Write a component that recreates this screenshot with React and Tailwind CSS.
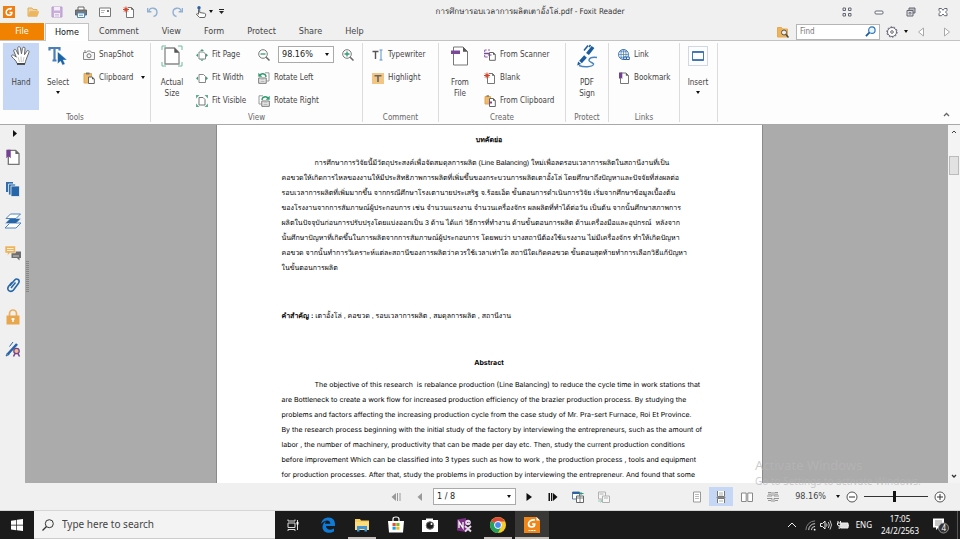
import { useState } from 'react';

const Icon = ({ size = 12, box = 12, children, className = '' }) => (
  <svg
    width={size}
    height={size}
    viewBox={`0 0 ${box} ${box}`}
    fill="none"
    stroke="#666"
    strokeWidth="1"
    aria-hidden="true"
    className={`shrink-0 ${className}`}
  >
    {children}
  </svg>
);

const Caret = ({ className = '' }) => (
  <svg width="4" height="3" viewBox="0 0 4 3" aria-hidden="true" className={`shrink-0 ${className}`}>
    <path d="M0 0h4L2 3z" fill="#111" />
  </svg>
);

/* ---------- title bar icons ---------- */

const FoxitLogo = () => (
  <Icon size={12}>
    <rect width="12" height="12" fill="#ee7d14" stroke="none" />
    <path d="M8.800 2.600C5.500 2.200 3.200 4 3.200 6.300c0 1.900 1.300 3 3 3 1.600 0 2.700-1 2.700-2.800H6.500" stroke="#fff" strokeWidth="1.500" />
    <path d="M9 1.800l-3 2.400 2-.2z" fill="#fff" stroke="none" />
  </Icon>
);

const OpenIcon = () => (
  <Icon>
    <path d="M1 10V2h4l1 1.500h4V5" fill="#f3d39b" stroke="#e2ae5c" />
    <path d="M1 10.500L3 5.500h9l-2 5z" fill="#eeb65c" stroke="#e2ae5c" strokeWidth=".5" />
  </Icon>
);

const SaveIcon = () => (
  <Icon>
    <path d="M1 1h10v10H1z" fill="#c9addb" stroke="#bb9ccf" />
    <path d="M3 1h6v3.500H3zM3 7h6v4H3z" fill="#f4eef8" stroke="none" />
    <path d="M4 8.500h4M4 10h4" stroke="#bb9ccf" strokeWidth=".6" />
  </Icon>
);

const PrintIcon = () => (
  <Icon>
    <path d="M3 4V1h6v3" fill="#fff" />
    <path d="M.5 4h11v5h-11z" fill="#777" stroke="#666" />
    <path d="M2.500 7h7v4.500h-7z" fill="#fff" stroke="#4b8ac0" />
    <path d="M4 9.200h4" stroke="#4b8ac0" />
  </Icon>
);

const MailIcon = () => (
  <Icon>
    <path d="M.5 2h11v8.500H.5z" fill="#fff" stroke="#777" />
    <path d="M2 4.500h4M2 6.500h3" stroke="#999" strokeWidth=".7" />
    <path d="M8 4h2v2H8z" fill="#777" stroke="none" />
  </Icon>
);

const BlankPage = () => (
  <Icon>
    <path d="M3.500 3v8.500h7V3.500L8.500 1.500H5" fill="#fff" stroke="#777" />
    <path d="M8.200 1.200v2.600h2.600z" fill="#555" stroke="none" />
    <path d="M3 .5v6M0 3.500h6M1 1.400l4 4.200M5 1.400L1 5.600" stroke="#d2492e" />
    <circle cx="3" cy="3.500" r="1.600" fill="#d2492e" stroke="none" />
  </Icon>
);

const Undo = ({ flip }) => (
  <Icon>
    <g transform={flip ? 'matrix(-1 0 0 1 12 0)' : undefined} stroke="#8fb0d2" strokeWidth="1.400">
      <path d="M1.800 5a4.200 4.200 0 1 1 4.700 5.500" />
      <path d="M.6 2v3.700h3.800" />
    </g>
  </Icon>
);

const TouchIcon = () => (
  <Icon>
    <path d="M3.500 8V3.500q.6-.8 1.200 0v3l4.800.8q1.600.4 1.200 1.800L9.700 11.500H4.500L1.300 8.200q.8-.9 2.200 0z" fill="#fff" stroke="#666" />
    <circle cx="4" cy="1.800" r="1.700" fill="#2a62a5" stroke="none" />
  </Icon>
);

/* ---------- ribbon icons ---------- */

const HandIcon = () => (
  <Icon size={22} box={22}>
    <path
      d="M7 18.500C6.500 16 4 14 1.800 11.800c-1-1.300.5-2.500 1.900-1.600l2.600 1.900L3.800 6.200c-.6-1.900 1.500-2.600 2.300-1l2.300 4.300L7.700 3.300c-.1-2 2.300-2.200 2.700-.3l1.100 5.900.9-5.600c.4-1.800 2.800-1.500 2.600.4l-.5 6 2.300-3.500c1-1.400 2.700-.5 2.200 1l-2.700 6.900c-.5 1.700-1.100 3-1.300 4.400z"
      fill="#fff"
      stroke="#666"
    />
    <path d="M8 12l1.500 5M11 11.500l.3 5.500M14 12l-1 5" stroke="#bbb" strokeWidth=".8" />
    <path d="M7 19h8" stroke="#444" strokeWidth="1.800" />
  </Icon>
);

const SelectIcon = () => (
  <Icon size={20} box={20}>
    <path d="M1.500 4.500V2h10v2.500M6.500 2v12M4.500 14.500h4" stroke="#4a7fb8" strokeWidth="2.200" />
    <path d="M9.500 5.500V18l3-2.700 2 4 2.600-1.300-1.900-3.900h4z" fill="#1c64a8" stroke="#fff" strokeWidth=".5" />
  </Icon>
);

const CameraIcon = () => (
  <Icon>
    <path d="M.5 3.500h3l1-1.500h3l1 1.500h3v7H.5z" fill="#f6f6f6" stroke="#888" />
    <circle cx="6" cy="6.800" r="2" stroke="#777" />
    <path d="M1 2h2" stroke="#888" />
  </Icon>
);

const ClipboardIcon = () => (
  <Icon>
    <path d="M1 1.500h7.500V11H1z" fill="#eebb6c" stroke="#e0a650" />
    <path d="M3 .5h3.500v2H3z" fill="#777" stroke="none" />
    <path d="M5.500 5h3.800l2 2v4.500H5.500z" fill="#fff" />
    <path d="M9 4.800V7.200h2.300z" fill="#555" stroke="none" />
  </Icon>
);

const ActualSizeIcon = () => (
  <Icon size={22} box={22}>
    <path d="M1 5V1h4M17 1h4v4M21 17v4h-4M5 21H1v-4" stroke="#6cbc9c" />
    <path d="M4 3h9.500l4.500 4.500V19H4z" fill="#fff" stroke="#888" strokeWidth="1.300" />
    <path d="M13.300 2.800v5h4.900z" fill="#555" stroke="none" />
  </Icon>
);

const FitPageIcon = () => (
  <Icon>
    <path d="M3 3h4.500L9.500 5v5H3z" fill="#fff" stroke="#888" />
    <path d="M6 0L8 2H4zM6 12L4 10.500h4zM0 6.200L2 4.400v3.600zM12 6.200L10 4.400v3.600z" fill="#3f9d7b" stroke="none" />
  </Icon>
);

const FitWidthIcon = () => (
  <Icon>
    <path d="M3 2.500h4.500L9.500 4.500v6H3z" fill="#fff" stroke="#888" />
    <path d="M0 6.300L2 4.400v3.800zM12 6.300L10 4.400v3.800z" fill="#3f9d7b" stroke="none" />
  </Icon>
);

const FitVisibleIcon = () => (
  <Icon>
    <path d="M3 2.500h4L9 4.500v5.500H3z" fill="#fff" stroke="#777" />
    <path d="M0 0h3.500L0 3.500zM12 0v3.500L8.500 0zM12 12H8.500L12 8.500zM0 12V8.500L3.500 12z" fill="#5fae90" stroke="none" />
  </Icon>
);

const ZoomGlass = ({ plus }) => (
  <Icon>
    <circle cx="5" cy="5" r="4.300" fill="#fff" stroke="#777" />
    <path d="M8.200 8.200l3.300 3.300" stroke="#666" strokeWidth="1.500" />
    <path d={plus ? 'M2.500 5h5M5 2.500v5' : 'M2.500 5h5'} stroke="#2f9b6f" strokeWidth="1.300" />
  </Icon>
);

const RotateIcon = ({ flip }) => (
  <Icon>
    <g transform={flip ? 'matrix(-1 0 0 1 12 0)' : undefined}>
      <path d="M7 .8h4V9H8.500" stroke="#999" />
      <path d="M.7 6h7.500v5.300H.7z" fill="#eee" stroke="#777" />
      <path d="M2.500 7.800h4M2.500 9.500h4" stroke="#999" strokeWidth=".6" />
      <path d="M1.500 3.500Q3 1.500 5 1.700q3 .3 3 3.300" stroke="#2f9b6f" strokeWidth="1.400" />
      <path d="M.3 4.800V.8L4.300 4.800z" fill="#2f9b6f" stroke="none" />
    </g>
  </Icon>
);

const TypewriterIcon = () => (
  <Icon>
    <path d="M.5 2.500h6M3.500 2.500V10" stroke="#555" strokeWidth="1.400" />
    <path d="M7.500 1h3M9 1v10M7.500 11h3" stroke="#5b93cb" />
  </Icon>
);

const HighlightIcon = () => (
  <Icon>
    <rect x="0" y="1" width="12" height="11" fill="#f2c583" stroke="none" />
    <path d="M2.500 3.700h7M6 3.500V10" stroke="#666" strokeWidth="1.600" />
  </Icon>
);

const FromFileIcon = () => (
  <Icon size={20} box={20}>
    <path d="M3.500 1h9.500l4.500 4.500V19h-14z" fill="#fff" stroke="#777" />
    <path d="M13 .8v4.900h4.900z" fill="#555" stroke="none" />
    <path d="M1 4.500h9v3.500H1z" fill="#7c4899" stroke="none" />
  </Icon>
);

const ScannerIcon = () => (
  <Icon>
    <path d="M.7 3V1h2M4 1h2M.7 8v-2M.7 8h3" stroke="#8c5aa8" />
    <path d="M0 4.500h6" stroke="#7c4899" strokeWidth="1.500" />
    <path d="M5.500 3.500h3.800l2 2v5.800H5.500z" fill="#fff" />
    <path d="M9 3.200v2.500h2.500z" fill="#555" stroke="none" />
    <path d="M4 6h3.500" stroke="#7c4899" />
  </Icon>
);

const FromClipboardIcon = () => (
  <Icon>
    <path d="M1 1.500h5.500V9H1z" fill="#eebb6c" stroke="#e0a650" />
    <path d="M2.500 .3h2.500v1.400H2.500z" fill="#777" stroke="none" />
    <path d="M5.500 3.500h3.800l2 2v6H5.500z" fill="#fff" />
    <path d="M9 3.200v2.500h2.500z" fill="#555" stroke="none" />
    <path d="M5 6.500h3v2H5z" fill="#7c4899" stroke="none" />
  </Icon>
);

const SignIcon = () => (
  <Icon size={24} box={24}>
    <path d="M18 3L12.500 10M10.500 12.500L5.500 18" stroke="#1c5b9c" strokeWidth="3.600" />
    <path d="M13 1.500L9 6.500" stroke="#1c5b9c" strokeWidth="1.500" />
    <path d="M15.500 1L14 3" stroke="#1c5b9c" strokeWidth="1.500" />
    <path d="M2.200 21.500l.9-4 3 2.400z" fill="#1c5b9c" stroke="none" />
    <path d="M4 21.500c5 2 13 1.500 14.500-1 .8-2-5-2-4.500-4.500.6-2.300 4-3 8-2.500" stroke="#4a83bd" strokeWidth="1.400" />
  </Icon>
);

const LinkIcon = () => (
  <Icon>
    <circle cx="5.500" cy="5.500" r="5" fill="#fff" stroke="#4179b4" />
    <path d="M.5 5.500h10M5.500.5v10M1.500 2.800h8M1.500 8.200h7" stroke="#4179b4" strokeWidth=".7" />
    <ellipse cx="5.500" cy="5.500" rx="2.500" ry="5" stroke="#4179b4" strokeWidth=".7" />
    <path d="M5.800 8h2.500v2.500H5.800zM8.500 8H11.300v2.500H8.500z" fill="#fff" stroke="#2a62a5" />
  </Icon>
);

const BookmarkIcon = ({ size = 12 }) => (
  <Icon size={size}>
    <path d="M2.500 1h5.500l2.500 2.500v8h-8z" fill="#fff" stroke="#777" />
    <path d="M7.800.7v3h3z" fill="#666" stroke="none" />
    <path d="M1 .5h3.300V7L2.700 5.500 1 7z" fill="#744192" stroke="none" />
  </Icon>
);

const FilmIcon = () => (
  <Icon size={12}>
    <path d="M.5 1.500h11v9H.5z" fill="#fff" stroke="#4179b4" />
    <path d="M.5 2.300h11M.5 9.700h11" stroke="#2a62a5" strokeWidth="1.600" />
    <path d="M1.500 2.200h10M1.500 9.800h10" stroke="#cfe0f2" strokeWidth=".6" strokeDasharray="1 1" />
  </Icon>
);

/* ---------- ribbon building blocks ---------- */

const Group = ({ label, width, children }) => (
  <section className={`flex shrink-0 flex-col border-r border-[#dcdcdc] ${width}`}>
    <div className="flex h-[67px] shrink-0 items-start">{children}</div>
    <h2 className="text-center leading-[16px] text-[#666]">{label}</h2>
  </section>
);

const BigButton = ({ icon, label, second, active, caret, width = 'w-9' }) => (
  <button
    type="button"
    className={`flex h-[67px] shrink-0 flex-col items-center ${width} ${active ? 'bg-[#c5d7f4]' : ''}`}
  >
    <span className="flex h-[26px] items-center justify-center">{icon}</span>
    <span className="mt-2 leading-[11px]">{label}</span>
    {second && <span className="leading-[11px]">{second}</span>}
    {caret && <Caret className="mt-[3px]" />}
  </button>
);

const SmallButton = ({ icon, label, caret }) => (
  <button type="button" className="flex h-[23px] items-center gap-1 whitespace-nowrap">
    {icon}
    <span>{label}</span>
    {caret && <Caret className="ml-1" />}
  </button>
);

const Column = ({ children, className = '' }) => (
  <div className={`flex flex-col ${className}`}>{children}</div>
);

const BoxSelect = ({ label, options, width }) => (
  <span className={`relative flex h-[17px] items-center border border-[#aaa] bg-white ${width}`}>
    <select aria-label={label} className="h-full w-full appearance-none bg-transparent px-[3px] text-[9px] text-[#222]">
      {options.map((option) => (
        <option key={option}>{option}</option>
      ))}
    </select>
    <Caret className="pointer-events-none absolute right-1" />
  </span>
);

/* ---------- page text ---------- */

const thaiLines = [
  'คอขวดให้เกิดการไหลของงานให้มีประสิทธิภาพการผลิตที่เพิ่มขึ้นของกระบวนการผลิตเตาอั้งโล่ โดยศึกษาถึงปัญหาและปัจจัยที่ส่งผลต่อ',
  'รอบเวลาการผลิตที่เพิ่มมากขึ้น จากกรณีศึกษาโรงเตานายประเสริฐ จ.ร้อยเอ็ด ขั้นตอนการดำเนินการวิจัย เริ่มจากศึกษาข้อมูลเบื้องต้น',
  'ของโรงงานจากการสัมภาษณ์ผู้ประกอบการ เช่น จำนวนแรงงาน จำนวนเครื่องจักร ผลผลิตที่ทำได้ต่อวัน เป็นต้น จากนั้นศึกษาสภาพการ',
  'ผลิตในปัจจุบันก่อนการปรับปรุงโดยแบ่งออกเป็น 3 ด้าน ได้แก่ วิธีการที่ทำงาน ด้านขั้นตอนการผลิต ด้านเครื่องมือและอุปกรณ์  หลังจาก',
  'นั้นศึกษาปัญหาที่เกิดขึ้นในการผลิตจากการสัมภาษณ์ผู้ประกอบการ โดยพบว่า บางสถานีต้องใช้แรงงาน ไม่มีเครื่องจักร ทำให้เกิดปัญหา',
  'คอขวด จากนั้นทำการวิเคราะห์แต่ละสถานีของการผลิตว่าควรใช้เวลาเท่าใด สถานีใดเกิดคอขวด ขั้นตอนสุดท้ายทำการเลือกวิธีแก้ปัญหา',
  'ในขั้นตอนการผลิต',
];

const englishLines = [
  'are Bottleneck to create a work flow for increased production efficiency of the brazier production process. By studying the',
  'problems and factors affecting the increasing production cycle from the case study of Mr. Pra-sert Furnace, Roi Et Province.',
  'By the research process beginning with the initial study of the factory by interviewing the entrepreneurs, such as the amount of',
  'labor , the number of machinery, productivity that can be made per day etc. Then, study the current production conditions',
  'before improvement Which can be classified into 3 types such as how to work , the production process , tools and equipment',
  'for production processes. After that, study the problems in production by interviewing the entrepreneur. And found that some',
];

/* ---------- sections ---------- */

const TitleBar = () => {
  const tools = [
    ['Foxit', <FoxitLogo />],
    ['Open', <OpenIcon />],
    ['Save', <SaveIcon />],
    ['Print', <PrintIcon />],
    ['Email', <MailIcon />],
    ['New', <BlankPage />],
    ['Undo', <Undo />],
    ['Redo', <Undo flip />],
    ['Touch mode', <TouchIcon />],
  ];
  return (
    <header className="flex h-[23px] shrink-0 items-center bg-[#f0f0f0]">
      <div className="flex w-[226px] items-center gap-3 pl-[3px]">
        {tools.map(([name, icon]) => (
          <button key={name} type="button" aria-label={name}>
            {icon}
          </button>
        ))}
        <span className="-ml-[10px] flex items-center gap-[6px]">
          <Caret />
          <svg width="5" height="5" viewBox="0 0 5 5" aria-hidden="true">
            <path d="M0 .5h5" stroke="#222" />
            <path d="M0 2h5L2.500 5z" fill="#222" />
          </svg>
        </span>
      </div>
      <h1 className="min-w-0 flex-1 truncate text-center text-[8px] leading-[16px] text-[#333] [text-rendering:geometricPrecision]">
        การศึกษารอบเวลาการผลิตเตาอั้งโล่.pdf - Foxit Reader
      </h1>
      <div className="flex w-[126px] items-center justify-end gap-[22px] pr-3">
        <button type="button" aria-label="Ribbon options">
          <Icon size={10} box={10}>
            <path d="M1 1h2.500v2.500H1zM6.500 1H9v2.500H6.500zM1 6.500h2.500V9H1zM6.500 6.500H9V9H6.500z" stroke="#667" />
          </Icon>
        </button>
        <button type="button" aria-label="Minimize">
          <Icon size={10} box={10}>
            <rect x="1" y="4" width="8" height="3" rx="1" fill="#fff" stroke="#667" />
          </Icon>
        </button>
        <button type="button" aria-label="Restore">
          <Icon size={10} box={10}>
            <path d="M3 1h6v5H3z" fill="#bbb" stroke="#667" />
            <path d="M1 3.500h6V9H1z" fill="#ddd" stroke="#667" />
            <path d="M3 5.500h2v1.500H3z" stroke="#667" strokeWidth=".7" />
          </Icon>
        </button>
        <button type="button" aria-label="Close">
          <Icon size={10} box={10}>
            <path d="M1 1.500h2.500L5 3.300l1.500-1.800H9v2L7.500 5 9 6.700v2H6.500L5 7 3.500 8.700H1v-2L2.500 5 1 3.500z" fill="#fff" stroke="#667" />
          </Icon>
        </button>
      </div>
    </header>
  );
};

const TabBar = () => (
  <nav className="flex h-[18px] shrink-0 items-stretch border-b border-[#c3c3c3] bg-[#f0f0f0] text-[9px]">
    <button type="button" className="w-11 bg-[#f08200] text-white">File</button>
    <button type="button" className="-mb-px ml-px w-11 border border-b-0 border-[#c3c3c3] bg-white text-[#111]">
      Home
    </button>
    <div className="flex items-center gap-[23px] pl-[10px]">
      {['Comment', 'View', 'Form', 'Protect', 'Share', 'Help'].map((tab) => (
        <button key={tab} type="button">{tab}</button>
      ))}
    </div>
    <div className="ml-auto flex items-center pr-2">
      <button type="button" aria-label="Search folder" className="mr-[7px]">
        <Icon>
          <path d="M.5 11V1.500h4l1 1.500h5v8z" fill="#efb45a" stroke="#e5a94e" />
          <circle cx="7" cy="6.500" r="2.500" fill="#eee" stroke="#555" />
          <path d="M9 8.500l2.500 3" stroke="#444" strokeWidth="1.500" />
        </Icon>
      </button>
      <label className="flex h-4 w-[84px] items-center border border-[#b5b5b5] bg-white px-[3px]">
        <input aria-label="Find" placeholder="Find" className="w-full min-w-0 text-[8px] outline-none placeholder:text-[#777]" />
        <Icon size={11}>
          <circle cx="7.500" cy="4.500" r="3.500" fill="#e8f5fb" stroke="#2f74b5" strokeWidth="1.300" />
          <path d="M5 7L1 11" stroke="#1c5b9c" strokeWidth="2" />
        </Icon>
      </label>
      <button type="button" aria-label="Settings" className="ml-[6px] flex items-center gap-[6px]">
        <Icon>
          <circle cx="6" cy="6" r="4.500" fill="#fff" stroke="#667" />
          <circle cx="6" cy="6" r="5.200" stroke="#667" strokeDasharray="1.600 1.600" />
          <circle cx="6" cy="6" r="1.300" stroke="#667" />
        </Icon>
        <Caret />
      </button>
      <button type="button" aria-label="Previous result" className="ml-2">
        <Icon size={10} box={10}><path d="M7.500 1v8L2.500 5z" fill="#fff" stroke="#aaa" /></Icon>
      </button>
      <button type="button" aria-label="Next result" className="ml-4">
        <Icon size={10} box={10}><path d="M2.500 1v8L7.500 5z" fill="#fff" stroke="#aaa" /></Icon>
      </button>
    </div>
  </nav>
);

const Ribbon = () => (
  <div className="flex h-[84px] shrink-0 border-b border-[#a8a8a8] bg-[#fdfdfd] pt-[2px] pb-[2px]">
    <Group label="Tools" width="w-[151px]">
      <BigButton icon={<HandIcon />} label="Hand" active width="ml-[3px] w-9" />
      <BigButton icon={<SelectIcon />} label="Select" caret width="ml-[1px] w-9" />
      <Column className="ml-[7px]">
        <SmallButton icon={<CameraIcon />} label="SnapShot" />
        <SmallButton icon={<ClipboardIcon />} label="Clipboard" caret />
      </Column>
    </Group>
    <Group label="View" width="w-[212px]">
      <BigButton icon={<ActualSizeIcon />} label="Actual" second="Size" width="ml-[3px] w-9" />
      <Column className="ml-[6px] w-[62px]">
        <SmallButton icon={<FitPageIcon />} label="Fit Page" />
        <SmallButton icon={<FitWidthIcon />} label="Fit Width" />
        <SmallButton icon={<FitVisibleIcon />} label="Fit Visible" />
      </Column>
      <Column>
        <div className="flex h-[23px] items-center gap-2">
          <button type="button" aria-label="Zoom out"><ZoomGlass /></button>
          <BoxSelect label="Zoom" options={['98.16%', '100%', '150%']} width="w-14" />
          <button type="button" aria-label="Zoom in"><ZoomGlass plus /></button>
        </div>
        <SmallButton icon={<RotateIcon />} label="Rotate Left" />
        <SmallButton icon={<RotateIcon flip />} label="Rotate Right" />
      </Column>
    </Group>
    <Group label="Comment" width="w-[76px]">
      <Column className="ml-[9px]">
        <SmallButton icon={<TypewriterIcon />} label="Typewriter" />
        <SmallButton icon={<HighlightIcon />} label="Highlight" />
      </Column>
    </Group>
    <Group label="Create" width="w-[127px]">
      <BigButton icon={<FromFileIcon />} label="From" second="File" width="ml-[3px] w-9" />
      <Column className="ml-[6px]">
        <SmallButton icon={<ScannerIcon />} label="From Scanner" />
        <SmallButton icon={<BlankPage />} label="Blank" />
        <SmallButton icon={<FromClipboardIcon />} label="From Clipboard" />
      </Column>
    </Group>
    <Group label="Protect" width="w-[43px]">
      <BigButton icon={<SignIcon />} label="PDF" second="Sign" width="ml-[3px] w-9" />
    </Group>
    <Group label="Links" width="w-[71px]">
      <Column className="ml-[9px]">
        <SmallButton icon={<LinkIcon />} label="Link" />
        <SmallButton icon={<BookmarkIcon />} label="Bookmark" />
      </Column>
    </Group>
    <Group label="" width="w-[38px]">
      <BigButton
        icon={<span className="flex size-5 items-center justify-center border border-[#d0d8e8]"><FilmIcon /></span>}
        label="Insert"
        caret
      />
    </Group>
    <button type="button" aria-label="Collapse ribbon" className="mt-auto mr-[10px] mb-1 ml-auto">
      <Icon size={7} box={7}><path d="M1 5l2.500-2.500L6 5" stroke="#666" strokeWidth="1.300" /></Icon>
    </button>
  </div>
);

const SideBar = () => {
  const panels = [
    ['Bookmarks', <BookmarkIcon size={16} />],
    ['Pages', (
      <Icon size={16} box={16}>
        <path d="M1 1h7v10H1z" fill="#2f6fb0" stroke="none" />
        <path d="M3.500 3h7v11h-7z" fill="#2f6fb0" stroke="#f0f0f0" strokeWidth=".8" />
        <path d="M6 5h8.500v10.500H6z" fill="#2565a8" stroke="#f0f0f0" strokeWidth=".8" />
      </Icon>
    )],
    ['Layers', (
      <Icon size={16} box={16}>
        <path d="M5 10h11l-5 5H0z" fill="#fff" stroke="#4a83bd" />
        <path d="M5 5.500h11l-5 5H0z" fill="#2565a8" stroke="#f0f0f0" strokeWidth=".5" />
        <path d="M5.500 1h10l-4.500 4.500H1z" fill="#fff" stroke="#4a83bd" />
      </Icon>
    )],
    ['Comments', (
      <Icon size={16} box={16}>
        <path d="M6.500 6.500H16V13h-1.500v2.500L12 13H6.500z" fill="#6e6e6e" stroke="none" />
        <path d="M8 11h6" stroke="#ccc" />
        <path d="M0 1h10.500v7H5L2.500 10.500V8H0z" fill="#eeb55f" stroke="#f0f0f0" strokeWidth=".5" />
        <path d="M2 3.500h6.500M2 5.500h6.500" stroke="#fff" strokeWidth=".8" />
      </Icon>
    )],
    ['Attachments', (
      <Icon size={16} box={16}>
        <path d="M5 8.500l4.500-5.300c2.300-2.500 6-.3 4 3L8.500 13c-2.500 3-7.500.5-5-3.500L7 5.300" stroke="#2565a8" strokeWidth="1.600" />
        <path d="M6 11l4.500-5.500" stroke="#2565a8" strokeWidth="1.500" />
      </Icon>
    )],
    ['Security', (
      <Icon size={16} box={16}>
        <path d="M4.500 7V4.500a3.500 3.500 0 0 1 7 0V7" stroke="#eab060" strokeWidth="1.700" />
        <path d="M1.500 6.500h13v9h-13z" fill="#e8a74c" stroke="none" />
        <path d="M8 9v4M6.500 10h3" stroke="#fff" strokeWidth="1.500" />
      </Icon>
    )],
    ['Signatures', (
      <Icon size={16} box={16}>
        <path d="M12 3L2.500 13.500" stroke="#2565a8" strokeWidth="2.600" />
        <path d="M8 1L4.500 5.500M1 15l1.500-3 1.500 1.500z" stroke="#2565a8" />
        <path d="M10 12.500L8.500 15.500M13 12.500l1.500 3" stroke="#74418f" strokeWidth="1.500" />
        <circle cx="11.500" cy="10" r="2.700" fill="#f0c08a" stroke="#74418f" strokeWidth="1.300" />
      </Icon>
    )],
  ];
  return (
    <aside className="flex w-[25px] shrink-0 flex-col items-center bg-[#f0f0f0] pt-[5px]">
      <button type="button" aria-label="Expand panel" className="ml-1">
        <svg width="4" height="7" viewBox="0 0 4 7" aria-hidden="true"><path d="M0 0v7l4-3.500z" fill="#111" /></svg>
      </button>
      <div className="mt-3 flex flex-col gap-4">
        {panels.map(([name, icon]) => (
          <button key={name} type="button" aria-label={name} className="block">
            {icon}
          </button>
        ))}
      </div>
    </aside>
  );
};

const Page = () => (
  <article className="h-full w-[547px] shrink-0 overflow-hidden border-x border-[#8a8a8a] bg-white px-[65px] pt-2 font-['Liberation_Sans',sans-serif] text-[7px] leading-[15px] whitespace-pre text-black [text-rendering:geometricPrecision]">
    <h2 className="text-center font-bold">บทคัดย่อ</h2>
    <div className="mt-2">
      <p className="pl-[33px]">การศึกษาการวิจัยนี้มีวัตถุประสงค์เพื่อจัดสมดุลการผลิต (Line Balancing) ใหม่เพื่อลดรอบเวลาการผลิตในสถานีงานที่เป็น</p>
      {thaiLines.map((line) => <p key={line}>{line}</p>)}
    </div>
    <p className="mt-[33px]">
      <b>คำสำคัญ :</b> เตาอั้งโล่ , คอขวด , รอบเวลาการผลิต , สมดุลการผลิต , สถานีงาน
    </p>
    <section lang="en" className="mt-[31px] font-['Inter',sans-serif]">
      <h2 className="text-center font-bold">Abstract</h2>
      <div className="mt-[7px]">
        <p className="pl-[33px]">The objective of this research  is rebalance production (Line Balancing) to reduce the cycle time in work stations that</p>
        {englishLines.map((line) => <p key={line}>{line}</p>)}
      </div>
    </section>
  </article>
);

const Workspace = () => (
  <main className="relative flex min-h-0 flex-1 bg-[#ababab]">
    <SideBar />
    <div className="flex w-[5px] shrink-0 items-center justify-center">
      <svg width="3" height="32" viewBox="0 0 3 32" aria-hidden="true" className="mb-[54px]">
        <path d="M1.500 0v32" stroke="#888" strokeWidth="3" strokeDasharray="1 1" />
      </svg>
    </div>
    <div className="flex min-w-0 flex-1 justify-center overflow-hidden">
      <Page />
    </div>
    <div className="flex w-3 shrink-0 flex-col items-center justify-between bg-[#f4f4f4] py-1">
      <Icon size={6} box={6}><path d="M1 4l2-2 2 2" stroke="#444" /></Icon>
      <span className="mb-auto mt-[21px] h-[19px] w-[10px] border border-[#bbb] bg-[#e2e2e2]" />
      <Icon size={6} box={6}><path d="M1 2l2 2 2-2" stroke="#333" strokeWidth="1.300" /></Icon>
    </div>
    <div className="pointer-events-none absolute right-[39px] -bottom-[5px] w-[166px] font-['Noto_Sans',sans-serif] whitespace-nowrap text-[#b6b6b6]/70">
      <p className="text-[13px] leading-[18px]">Activate Windows</p>
      <p className="text-[10px] leading-[14px]">Go to Settings to activate Windows.</p>
    </div>
  </main>
);

const StatusBar = () => {
  const [zoom, setZoom] = useState(48);
  return (
    <footer className="flex h-7 shrink-0 items-center border-b border-[#d5d5d5] bg-[#f0f0f0]">
      <div className="flex flex-1 items-center justify-end gap-[14px]">
        <button type="button" aria-label="First page">
          <Icon size={10} box={10}><path d="M5 1v8L.5 5zM6 1h1v8H6zM8.500 1h1v8h-1z" fill="#999" stroke="none" /></Icon>
        </button>
        <button type="button" aria-label="Previous page">
          <Icon size={10} box={10}><path d="M7 1v8L2.500 5z" fill="#999" stroke="none" /></Icon>
        </button>
        <BoxSelect label="Page" options={['1 / 8', '2 / 8', '3 / 8']} width="-ml-[6px] w-[83px]" />
        <button type="button" aria-label="Next page" className="-ml-[6px]">
          <Icon size={10} box={10}><path d="M2.500 1v8L8 5z" fill="#111" stroke="none" /></Icon>
        </button>
        <button type="button" aria-label="Last page">
          <Icon size={10} box={10}><path d="M5 1v8l4.500-4zM.5 1h1.500v8H.5zM3 1h1.300v8H3z" fill="#111" stroke="none" /></Icon>
        </button>
        <button type="button" aria-label="Previous view">
          <Icon>
            <path d="M.5 1h7v7h-7z" fill="#fff" stroke="#5b7d9e" />
            <path d="M.5 2h7" stroke="#2a62a5" strokeWidth="2" />
            <path d="M4.500 5h7v6.500h-7z" fill="#fff" />
            <path d="M4.500 7h7M8 5v6" strokeWidth=".8" />
            <path d="M8 2.500h3.500M9.500 1L8 2.500 9.500 4" stroke="#2f9b6f" />
          </Icon>
        </button>
        <button type="button" aria-label="Next view">
          <Icon>
            <g opacity=".45">
              <path d="M.5 1h7v7h-7z" fill="#fff" />
              <path d="M4.500 5h7v6.500h-7z" fill="#fff" />
              <path d="M6 7h4M1.500 3h4" />
              <path d="M0 10h3.500M2.500 8.500L4 10l-1.500 1.500" stroke="#2f9b6f" />
            </g>
          </Icon>
        </button>
      </div>
      <div className="flex w-[350px] items-center justify-end pr-[14px]">
        <div className="flex items-center">
          <button type="button" aria-label="Single page" className="flex h-[19px] w-6 items-center justify-center">
            <Icon><path d="M2.500 1h7v10h-7z" fill="#fff" stroke="#999" /><path d="M4 3.500h4M4 5.500h4M4 7.500h4" stroke="#aaa" strokeWidth=".8" /></Icon>
          </button>
          <button type="button" aria-label="Continuous" className="flex h-[19px] w-6 items-center justify-center bg-[#c5d7f4]">
            <Icon><path d="M2.500 0v5.500h7V0M2.500 12V7.500h7V12" fill="#fff" stroke="#777" /><path d="M4 2h4M4 4h4M4 10h4" stroke="#999" strokeWidth=".8" /><path d="M1.500 6.500h9" stroke="#888" /></Icon>
          </button>
          <button type="button" aria-label="Facing" className="ml-[2px] flex h-[19px] w-6 items-center justify-center">
            <Icon><path d="M.5 2h4.700v8.500H.5zM6.800 2h4.700v8.500H6.800z" fill="#fff" stroke="#888" /></Icon>
          </button>
          <button type="button" aria-label="Continuous facing" className="ml-[2px] flex h-[19px] w-6 items-center justify-center">
            <Icon><path d="M0 5h5V1M12 5H7V1M0 7.500h5V11M12 7.500H7V11M1 1.500h3M1 3.200h3M8 1.500h3M8 3.200h3M1 9.500h3M8 9.500h3" stroke="#888" strokeWidth=".9" /></Icon>
          </button>
        </div>
        <button type="button" className="ml-[10px] flex items-center gap-[10px] text-[9px]">
          98.16%
          <Caret />
        </button>
        <button type="button" aria-label="Zoom out" className="ml-[6px]">
          <Icon><circle cx="6" cy="6" r="5" fill="#fff" stroke="#555" /><path d="M3 6h6" stroke="#333" /></Icon>
        </button>
        <input
          type="range"
          aria-label="Zoom level"
          value={zoom}
          onChange={(e) => setZoom(e.target.value)}
          className="mx-[6px] h-3 w-16 appearance-none bg-transparent [&::-webkit-slider-runnable-track]:h-px [&::-webkit-slider-runnable-track]:bg-[#333] [&::-webkit-slider-thumb]:-mt-[5px] [&::-webkit-slider-thumb]:h-[11px] [&::-webkit-slider-thumb]:w-[3px] [&::-webkit-slider-thumb]:appearance-none [&::-webkit-slider-thumb]:bg-[#111]"
        />
        <button type="button" aria-label="Zoom in">
          <Icon><circle cx="6" cy="6" r="5" fill="#fff" stroke="#555" /><path d="M3 6h6M6 3v6" stroke="#333" /></Icon>
        </button>
      </div>
    </footer>
  );
};

const TaskBar = () => {
  const apps = [
    ['Edge', false, (
      <Icon size={16} box={16}>
        <path d="M1 7C2 2.500 5 .5 8.500.5c4.500 0 6.500 3.300 6.500 6.500v2H6c.2 4 5 4.500 8 2.500v3C9.500 17 2.500 16 2.500 10c0-3 1.800-4.800 4-5.700C5.500 5 5.200 6 5 6.800h5.300C10.300 2 4.500 2.500 1 7z" fill="#0f7bd6" stroke="none" />
      </Icon>
    )],
    ['File Explorer', true, (
      <Icon size={16} box={16}>
        <path d="M1 2h5l1 1.500h8V13H1z" fill="#f7cf5c" stroke="none" />
        <path d="M1 5h14v8H1z" fill="#fbdd7d" stroke="none" />
        <path d="M3 14.500V9h10v5.500h-2.500V12h-5v2.500z" fill="#3f95d8" stroke="none" />
      </Icon>
    )],
    ['Store', false, (
      <Icon size={18} box={18}>
        <path d="M6 6V3q0-2 3-2t3 2v3" stroke="#fff" strokeWidth="1.200" />
        <path d="M1 5h16l-1 11.500H2z" fill="#fff" stroke="none" />
        <path d="M5.500 7H8.700v3H5.500z" fill="#e8502d" stroke="none" />
        <path d="M9.300 7h3.200v3H9.300z" fill="#7cb928" stroke="none" />
        <path d="M5.500 10.700H8.700v3H5.500z" fill="#1ba0e1" stroke="none" />
        <path d="M9.300 10.700h3.200v3H9.300z" fill="#f7b813" stroke="none" />
      </Icon>
    )],
    ['Camera', false, (
      <Icon size={18} box={18}>
        <path d="M1 4h4V2.500h7V4h5v12H1z" fill="#fff" stroke="none" />
        <circle cx="9" cy="9.500" r="3.800" fill="#1c1c1c" stroke="#777" />
        <circle cx="10.500" cy="8" r="1" fill="#fff" stroke="none" />
      </Icon>
    )],
    ['OneNote', false, (
      <Icon size={16} box={16}>
        <path d="M1 2.500L10 1v14L1 13.500z" fill="#7c3084" stroke="none" />
        <path d="M3 11V5l4 6V5" stroke="#fff" strokeWidth="1.300" />
        <circle cx="12" cy="5.500" r="2.800" fill="#e8d8ec" stroke="none" />
        <path d="M9 9l6 5.500M15 9l-6 5.500" stroke="#e8d8ec" strokeWidth="2" />
        <path d="M11 5.500h.8M12.700 5.500h.8" stroke="#5d2463" strokeWidth="1.200" />
      </Icon>
    )],
    ['Chrome', true, (
      <Icon size={16} box={16}>
        <circle cx="8" cy="8" r="8" fill="#f8cd27" stroke="none" />
        <path d="M8 8L1.100 4A8 8 0 0 0 8 16l3-6z" fill="#23a05b" stroke="none" />
        <path d="M1.100 4A8 8 0 0 1 14.900 4.500H8V8z" fill="#de4a3a" stroke="none" />
        <circle cx="8" cy="8" r="3.500" fill="#4a8af0" stroke="#fff" />
      </Icon>
    )],
    ['Foxit Reader', true, (
      <Icon size={18} box={18}>
        <path d="M1 1h12.500L17 4.500V17H1z" fill="#f08519" stroke="none" />
        <path d="M13.500 1v3.500H17z" fill="#fff" stroke="none" />
        <path d="M12 4C8 3.500 5.500 5.500 5.500 8c0 2 1.300 3 3.200 3s3-1.200 3-3H9" stroke="#fff" strokeWidth="1.700" />
        <path d="M5.500 14.500h7" stroke="#fff" strokeDasharray="2 .6" strokeWidth="1.200" />
      </Icon>
    )],
  ];
  return (
    <div className="flex h-7 shrink-0 items-stretch bg-[#1b1b1b] font-['Noto_Sans',sans-serif] text-white">
      <button type="button" aria-label="Start" className="flex w-[34px] items-center justify-center">
        <Icon size={12}>
          <path d="M0 1.700l5.300-.8v4.800H0zM6 .8L12 0v5.700H6zM0 6.400h5.300v4.800L0 10.400zM6 6.400h6V12l-6-.8z" fill="#fff" stroke="none" />
        </Icon>
      </button>
      <label className="flex w-[241px] items-center gap-2 border-b border-[#ccc] bg-[#f3f3f3] px-2">
        <Icon size={12}>
          <circle cx="7.300" cy="4.700" r="4" stroke="#333" />
          <path d="M4.500 7.500L.5 11.500" stroke="#333" strokeWidth="1.200" />
        </Icon>
        <input
          aria-label="Windows search"
          placeholder="Type here to search"
          className="w-full min-w-0 bg-transparent text-[10px] text-[#333] outline-none placeholder:text-[#444]"
        />
      </label>
      <button type="button" aria-label="Task view" className="flex w-9 items-center justify-center">
        <Icon>
          <path d="M1 .5v1.500h7V.5M1 4h7v4.500H1zM1 12v-1.500h7V12" stroke="#ddd" />
          <path d="M10.500 1v10" stroke="#ddd" />
          <path d="M10.500 3v2.500" stroke="#fff" strokeWidth="2" />
        </Icon>
      </button>
      {apps.map(([name, open, icon]) => (
        <button
          key={name}
          type="button"
          aria-label={name}
          className={`relative flex w-[34px] items-center justify-center ${name === 'Foxit Reader' ? 'bg-[#3a3836]' : ''}`}
        >
          {icon}
          {open && (
            <span className={`absolute bottom-0 h-[2px] bg-[#c4beba] ${name === 'Foxit Reader' ? 'inset-x-0' : 'inset-x-[3px]'}`} />
          )}
        </button>
      ))}
      <div className="ml-auto flex items-center text-[8px]">
        <Icon size={10} box={10}><path d="M1 7l4-4 4 4" stroke="#eee" /></Icon>
        <Icon size={11} className="ml-2">
          <path d="M1 11A10 10 0 0 1 11 1" stroke="#888" />
          <path d="M4 11a7 7 0 0 1 7-7M7 11a4 4 0 0 1 4-4" stroke="#ddd" />
          <circle cx="10.500" cy="10.500" r="1" fill="#fff" stroke="none" />
        </Icon>
        <Icon className="ml-1">
          <path d="M.5 4.500h2L5 2v8L2.500 7.500h-2z" stroke="#eee" />
          <path d="M6.500 4.500q1 1.500 0 3M8.300 3q2 3 0 6M10 1.500q3 4.500 0 9" stroke="#ddd" strokeWidth=".9" />
        </Icon>
        <Icon className="ml-[5px]">
          <path d="M4 4h7v5H3.500z" fill="#ddd" stroke="#eee" />
          <path d="M11.700 5.500v2M1 2v2M3.500 2v2M.5 4h3.500v2q-1.700 1.500-3.500 0zM2.200 6.500V10" stroke="#eee" />
        </Icon>
        <span className="ml-[7px]">ENG</span>
        <time className="ml-[9px] text-center leading-[12px]">
          17:05
          <br />
          24/2/2563
        </time>
        <button type="button" aria-label="Notifications" className="relative mr-2 ml-3">
          <Icon size={18} box={18}>
            <path d="M2 2.500h11v9H7.500L5 14v-2.500H2z" fill="#fff" stroke="none" />
            <path d="M4 5h7M4 7h7M4 9h4" stroke="#777" strokeWidth=".8" />
            <circle cx="12.500" cy="12" r="5" fill="#333" stroke="#aaa" strokeWidth=".8" />
          </Icon>
          <span className="absolute right-[3px] bottom-px text-[8px] leading-[10px]">4</span>
        </button>
        <span className="mr-[2px] h-7 border-l border-[#555]" />
      </div>
    </div>
  );
};

export default function App() {
  return (
    <div className="flex h-screen w-full flex-col overflow-hidden bg-[#f0f0f0] font-['DejaVu_Sans_Condensed','Noto_Sans',sans-serif] text-[8px] text-[#444]">
      <TitleBar />
      <TabBar />
      <Ribbon />
      <Workspace />
      <StatusBar />
      <TaskBar />
    </div>
  );
}
